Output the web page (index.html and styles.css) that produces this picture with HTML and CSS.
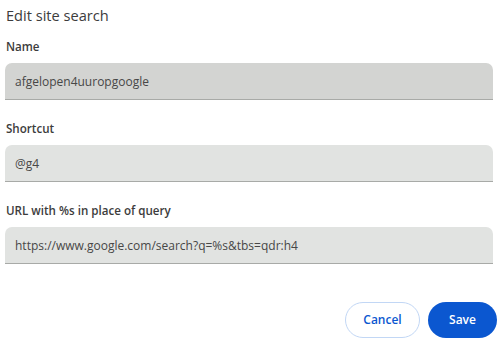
FILE: index.html
```html
<!doctype html>
<html>
<head>
<meta charset="utf-8">
<link rel="stylesheet" href="styles.css">
<title>Edit site search</title>
</head>
<body>

    <div class="dialog">
        <h1>Edit site search</h1>

        <label class="field field-first field-focus">
            <span class="field-label">Name</span>
            <input type="text" name="name" value="afgelopen4uuropgoogle">
        </label>

        <label class="field">
            <span class="field-label">Shortcut</span>
            <input type="text" name="shortcut" value="@g4">
        </label>

        <label class="field">
            <span class="field-label">URL with %s in place of query</span>
            <input type="text" name="url" value="https://www.google.com/search?q=%s&amp;tbs=qdr:h4">
        </label>

        <div class="buttons">
            <button type="button" class="btn btn-cancel">Cancel</button>
            <button type="button" class="btn btn-save">Save</button>
        </div>
    </div>

</body>
</html>
```
FILE: styles.css
```css
html
{
    background:#fff;
    color:#1f1f1f;
}
body
{
    margin:0;
    font:normal normal 12px/16px "Open Sans", "Noto Sans", sans-serif;
}
.dialog
{
    padding:4px 7px 0 5px;
}
h1
{
    margin:0 0 0 1px;
    font:normal normal 14.6px/22px "Open Sans", sans-serif;
    color:#3c3c3c;
}
.field
{
    display:block;
}
.field-label
{
    display:block;
    padding:21px 0 0 1px;
    margin-bottom:8px;
    font-weight:600;
    font-size:11.6px;
    line-height:16px;
    color:#3c3c3c;
}
.field-first .field-label
{
    padding-top:13px;
}
.field input
{
    display:block;
    box-sizing:border-box;
    width:100%;
    height:37px;
    margin:0;
    padding:0 10px;
    border:none;
    border-bottom:1px solid #a8aaa7;
    border-radius:7px 7px 0 0;
    background:#e1e3e1;
    font:normal normal 12px/16px "Open Sans", sans-serif;
    color:#474747;
    outline:none;
}
.field-focus input
{
    background:#d3d4d2;
}
.buttons
{
    display:flex;
    justify-content:flex-end;
    gap:8px;
    margin:38px -4px 0 0;
}
.btn
{
    height:36px;
    border-radius:18px;
    font:normal normal 600 12px/16px "Open Sans", sans-serif;
    padding:0;
}
.btn-cancel
{
    width:75px;
    background:#fff;
    border:1px solid #c2d7f5;
    color:#0b57d0;
}
.btn-save
{
    width:69px;
    background:#0b57d0;
    border:none;
    color:#fff;
}
```
